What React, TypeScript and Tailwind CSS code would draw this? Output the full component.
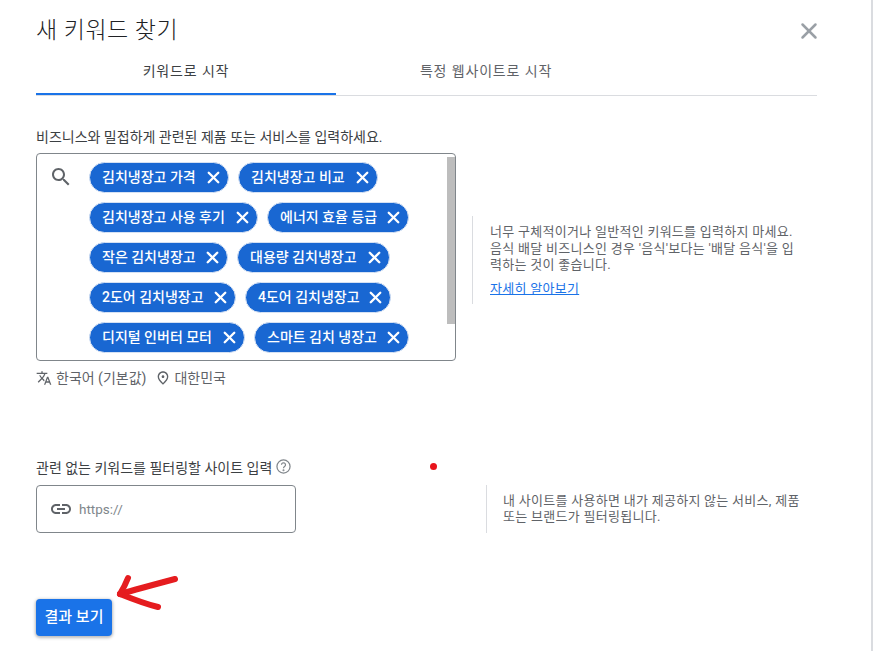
import { X } from "lucide-react";

const font = "font-['Roboto','Noto_Sans_CJK_KR',sans-serif]";

const rows = [
  [{ t: "김치냉장고 가격", w: "w-[140px]" }, { t: "김치냉장고 비교", w: "w-[140px]" }],
  [{ t: "김치냉장고 사용 후기", w: "w-[169px]" }, { t: "에너지 효율 등급", w: "w-[142px]" }],
  [{ t: "작은 김치냉장고", w: "w-[139px]" }, { t: "대용량 김치냉장고", w: "w-[153px]" }],
  [{ t: "2도어 김치냉장고", w: "w-[147px]" }, { t: "4도어 김치냉장고", w: "w-[146px]" }],
  [{ t: "디지털 인버터 모터", w: "w-[156px]" }, { t: "스마트 김치 냉장고", w: "w-[155px]" }],
];

function Chip({ t, w }: { t: string; w: string }) {
  return (
    <div className={`${w} flex h-[31px] items-center justify-between rounded-full border border-[#d5e1f3] bg-[#1967d2] pl-3 pr-[5px] text-[14px] font-medium text-white`}>
      <span className="whitespace-nowrap">{t}</span>
      <X size={19} strokeWidth={3} />
    </div>
  );
}

export default function App() {
  return (
    <div className={`${font} relative h-[651px] w-[873px] overflow-hidden border-r-2 border-[#dadce0] bg-white text-[#3c4043]`}>
      <div className="px-9 pt-[15px]">
        <div className="flex h-[32px] w-[781px] items-center justify-between">
          <h1 className="text-[23px] font-light tracking-[0.5px] text-[#202124]">새 키워드 찾기</h1>
          <X size={26} strokeWidth={2.3} className="mr-[-5px] text-[#9aa0a6]" />
        </div>

        <div className="flex h-[49px] w-[781px] border-b border-[#dadce0] text-[14px] tracking-[0.85px]">
          <div className="flex h-[48px] w-[300px] items-center justify-center border-b-2 border-[#1a73e8] pt-[2px] text-[#3c4043]">키워드로 시작</div>
          <div className="flex h-[48px] w-[300px] items-center justify-center pt-[1px] text-[#5f6368]">특정 웹사이트로 시작</div>
        </div>

        <p className="mt-[32px] h-[18px] text-[14px] leading-[18px] text-[#3c4043]">비즈니스와 밀접하게 관련된 제품 또는 서비스를 입력하세요.</p>

        <div className="flex">
          <div>
            <div className="relative mt-[7px] h-[208px] w-[420px] rounded border border-[#80868b] pl-[14px] pt-[8px]">
              <svg width="24" height="24" viewBox="0 0 24 24" fill="#5f6368" className="absolute left-[12px] top-[11px]">
                <path d="M15.5 14h-.79l-.28-.27C15.41 12.59 16 11.11 16 9.5 16 5.91 13.09 3 9.5 3S3 5.91 3 9.5 5.91 16 9.5 16c1.61 0 3.09-.59 4.23-1.57l.27.28v.79l5 4.99L20.49 19l-4.99-5zm-6 0C7.01 14 5 11.99 5 9.5S7.01 5 9.5 5 14 7.01 14 9.5 11.99 14 9.5 14z" />
              </svg>
              <div className="flex flex-col gap-[9px] pl-[38px]">
                {rows.map((r, i) => (
                  <div key={i} className="flex gap-[9px]">
                    {r.map((c) => (
                      <Chip key={c.t} t={c.t} w={c.w} />
                    ))}
                  </div>
                ))}
              </div>
              <div className="absolute right-0 top-[3px] h-[167px] w-2 bg-[#bdbdbd]" />
            </div>
            <div className="mt-[8px] flex h-[18px] items-center text-[14px] text-[#5f6368]">
              <svg width="16" height="16" viewBox="0 0 24 24" fill="#5f6368" className="mr-1">
                <path d="M12.87 15.07l-2.54-2.51.03-.03c1.74-1.94 2.98-4.17 3.71-6.53H17V4h-7V2H8v2H1v1.99h11.17C11.5 7.92 10.44 9.75 9 11.35 8.07 10.32 7.3 9.19 6.69 8h-2c.73 1.63 1.73 3.17 2.98 4.56l-5.09 5.02L4 19l5-5 3.11 3.11.76-2.04zM18.5 10h-2L12 22h2l1.12-3h4.75L21 22h2l-4.5-12zm-2.62 7l1.62-4.33L19.12 17h-3.24z" />
              </svg>
              <span>한국어 (기본값)</span>
              <svg width="16" height="16" viewBox="0 0 24 24" fill="#5f6368" className="ml-[9px] mr-[3px]">
                <path d="M12 12c-1.1 0-2-.9-2-2s.9-2 2-2 2 .9 2 2-.9 2-2 2zm6-1.8C18 6.57 15.35 4 12 4s-6 2.57-6 6.2c0 2.34 1.95 5.44 6 9.14 4.05-3.7 6-6.8 6-9.14zM12 2c4.2 0 8 3.22 8 8.2 0 3.32-2.67 7.25-8 11.8-5.33-4.55-8-8.48-8-11.8C4 5.22 7.8 2 12 2z" />
              </svg>
              <span>대한민국</span>
            </div>
          </div>

          <div className="ml-4 mt-[70px] h-[88px] w-[326px] border-l border-[#dadce0] pl-[17px] pt-[8px] text-[13px] leading-[16.5px] tracking-[0.28px] text-[#5f6368]">
            <p className="w-[306px]">너무 구체적이거나 일반적인 키워드를 입력하지 마세요. 음식 배달 비즈니스인 경우 '음식'보다는 '배달 음식'을 입력하는 것이 좋습니다.</p>
            <a className="mt-[7px] block text-[#1a73e8] underline">자세히 알아보기</a>
          </div>
        </div>

        <div className="mt-[72px] flex h-[18px] items-center text-[14px] text-[#3c4043]">
          <span>관련 없는 키워드를 필터링할 사이트 입력</span>
          <svg width="15" height="15" viewBox="0 0 24 24" fill="none" stroke="#80868b" strokeWidth="2" className="ml-[4px] mt-[-3px]">
            <circle cx="12" cy="12" r="10.5" />
            <path d="M8.8 9.3a3.2 3.2 0 1 1 4.9 2.7c-1 .7-1.7 1.3-1.7 2.6" />
            <circle cx="12" cy="18" r="0.6" fill="#80868b" />
          </svg>
        </div>

        <div className="flex">
          <div className="mt-[8px] flex h-[48px] w-[260px] items-center rounded border border-[#80868b] pl-[12px] text-[13.5px] text-[#80868b]">
            <svg width="24" height="24" viewBox="0 0 24 24" fill="#5f6368">
              <path d="M3.9 12c0-1.71 1.39-3.1 3.1-3.1h4V7H7c-2.76 0-5 2.24-5 5s2.24 5 5 5h4v-1.9H7c-1.71 0-3.1-1.39-3.1-3.1zM8 13h8v-2H8v2zm9-6h-4v1.9h4c1.71 0 3.1 1.39 3.1 3.1s-1.39 3.1-3.1 3.1h-4V17h4c2.76 0 5-2.24 5-5s-2.24-5-5-5z" />
            </svg>
            <span className="ml-[6px] pt-[1px]">https://</span>
          </div>
          <div className="ml-[190px] mt-[8px] h-[48px] w-[320px] border-l border-[#dadce0] pl-4 pt-[8px] text-[13px] leading-[16px] tracking-[0.28px] text-[#5f6368]">
            <p className="w-[300px]">내 사이트를 사용하면 내가 제공하지 않는 서비스, 제품 또는 브랜드가 필터링됩니다.</p>
          </div>
        </div>

        <button className="mt-[66px] h-[37px] w-[76px] rounded bg-[#1a73e8] text-[15px] font-medium text-white shadow-[0_1px_3px_1px_rgba(60,64,67,0.35)]">결과 보기</button>
      </div>

      <div className="absolute left-[430px] top-[463px] h-[7px] w-[7px] rounded-full bg-[#e8141c]" />

      <svg className="absolute left-[112px] top-[572px]" width="70" height="40" viewBox="0 0 70 40" fill="none" stroke="#e51c1f" strokeWidth="6" strokeLinecap="round" strokeLinejoin="round">
        <path d="M63 7 C48 11 22 18 8 22" />
        <path d="M8 22 C18 26 33 32 46 35" />
        <path d="M16 6 C14 11 11 17 8 22" />
      </svg>
    </div>
  );
}
